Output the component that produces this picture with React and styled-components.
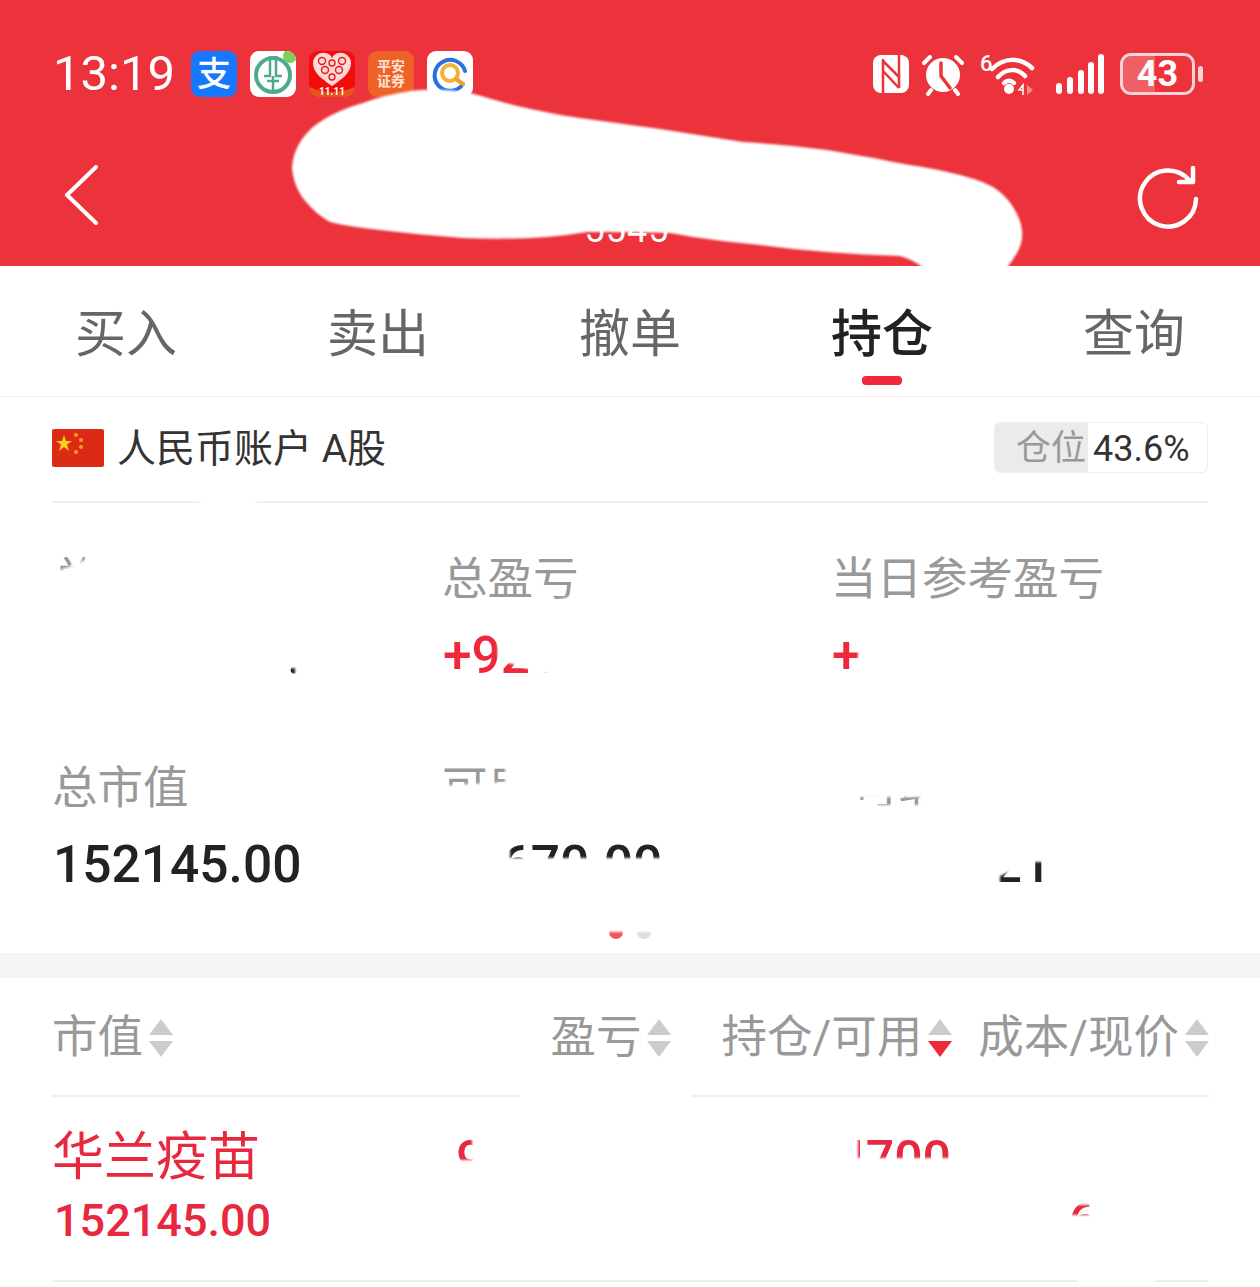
import React from "react";
import styled, {createGlobalStyle} from "styled-components";

const tabs = ['买入', '卖出', '撤单', '持仓', '查询']
const stats = [
    {label: '总资产', value: '34895621.00'},
    {label: '总盈亏', value: '+92145.00', red: true},
    {label: '当日参考盈亏', value: '+1250.00', red: true},
    {label: '总市值', value: '152145.00'},
    {label: '可用', value: '19670.00'},
    {label: '可取资金', value: '19681.21', indent: true},
]
const columns = [
    {label: '盈亏', gap: 0},
    {label: '持仓/可用', gap: 50, active: true},
    {label: '成本/现价', gap: 26},
]

// white scribbles that hide the private numbers in the screenshot
const scribbles = [
    'M292 168C293 150 302 137 313 127C328 115 345 108 363 103C382 96 400 92 420 90C438 89 455 90 470 93C485 97 498 101 513 105C535 110 558 115 580 118C607 122 633 125 660 129C688 133 715 138 743 142C771 144 799 146 827 150C849 154 871 157 893 162C915 166 938 169 960 175C972 178 984 182 993 187C1002 193 1008 199 1013 207C1018 215 1021 222 1022 230C1023 238 1021 246 1017 253C1014 258 1011 262 1007 268H924C916 262 908 258 900 256C875 255 851 254 827 252C805 250 782 248 760 245C738 243 715 240 693 237C686 236 678 234 670 233C642 232 614 232 587 232C574 234 560 236 547 237C519 239 491 239 463 238C435 236 407 233 380 230C363 228 346 226 330 222C320 216 313 210 307 203C298 193 293 181 292 168Z',
    'M200 498H256V505H200Z',
    'M85 545H440V575H85Z',
    'M40 575Q60 572 85 560V575L440 575V668H40Z',
    'M40 668H285V700H40Z',
    'M295 668H440V700H295Z',
    'M540 604L582 594L600 620H540Z',
    'M497 625H830V700H440V680L560 678L498 660Z',
    'M858 625H1215V700H858Z',
    'M505 760H820V843H440V786L505 782Z',
    'M440 858H820V905H440Z',
    'M440 843H510V858H440Z',
    'M662 843H820V858H662Z',
    'M820 750H1215V797H820Z',
    'M820 797H855V862H820Z',
    'M920 797H1215V862H920Z',
    'M855 805H920V862H855Z',
    'M820 862H1032L1000 876V900H820Z',
    'M1047 855H1215V900H1047Z',
    'M560 905H700V932H560Z',
    'M520 1093H692V1099H520Z',
    'M440 1099H1215V1138H440Z',
    'M472 1138H858V1275H472Z',
    'M440 1160H472V1275H440Z',
    'M858 1158H960V1275H858Z',
    'M950 1138H1070V1275H950Z',
    'M960 1138H1215V1205H960Z',
    'M1090 1205H1215V1215H1090Z',
    'M1070 1215H1215V1275H1070Z',
    'M1078 1277H1155V1283H1078Z',
]

const App = () => {
    const position = 43.9

    return (
        <Page>
            <GlobalStyle/>
            <Header>
                <StatusBar>
                    <Left>
                        <Time>13:19</Time>
                        <AppTile $bg="#1677ff">
                            <AlipayGlyph>支</AlipayGlyph>
                        </AppTile>
                        <AppTile $bg="#ffffff"><BankLogo/></AppTile>
                        <AppTile $bg="#f40b0b"><HeartLogo/></AppTile>
                        <AppTile $bg="#ef6127">
                            <PingAn>平安<br/>证券</PingAn>
                        </AppTile>
                        <AppTile $bg="#ffffff"><SearchLogo/></AppTile>
                    </Left>
                    <Right>
                        <NfcIcon/>
                        <AlarmIcon/>
                        <WifiIcon/>
                        <SignalIcon/>
                        <Battery>
                            <BatteryBody>
                                <BatteryFill/>
                                <BatteryText>43</BatteryText>
                            </BatteryBody>
                            <BatteryNub/>
                        </Battery>
                    </Right>
                </StatusBar>
                <Nav>
                    <svg width="34" height="60" viewBox="0 0 34 60" fill="none" stroke="#fff" strokeWidth="4" strokeLinecap="round" strokeLinejoin="round">
                        <path d="M32 2L3 30L32 58"/>
                    </svg>
                    <Account>5545</Account>
                    <svg width="64" height="64" viewBox="0 0 64 64" fill="none" stroke="#fff" strokeWidth="4.5" strokeLinecap="round" strokeLinejoin="round">
                        <path d="M53 15A28 28 0 1 0 60 34"/>
                        <path d="M57 3V17H43"/>
                    </svg>
                </Nav>
            </Header>

            <Tabs>
                {tabs.map(tab => (
                    <Tab key={tab} $active={tab === '持仓'}>{tab}</Tab>
                ))}
            </Tabs>

            <AccountRow>
                <AccountName>
                    <Flag/>
                    <AccountText>人民币账户 A股</AccountText>
                </AccountName>
                <Badge>
                    <BadgeFill style={{width: `${position}%`}}/>
                    <BadgeLabel>仓位</BadgeLabel>
                    <BadgeValue>43.6%</BadgeValue>
                </Badge>
            </AccountRow>

            <Stats>
                {stats.map(item => (
                    <Stat key={item.label}>
                        <StatLabel $indent={item.indent}>{item.label}</StatLabel>
                        <StatValue $red={item.red}>{item.value}</StatValue>
                    </Stat>
                ))}
            </Stats>
            <Dots>
                <Dot $active/>
                <Dot/>
            </Dots>

            <Band/>

            <TableHead>
                <HeadCell>市值<SortArrows/></HeadCell>
                <HeadRight>
                    {columns.map(col => (
                        <HeadCell key={col.label} $gap={col.gap}>
                            {col.label}
                            <SortArrows active={col.active}/>
                        </HeadCell>
                    ))}
                </HeadRight>
            </TableHead>

            <Row>
                <div>
                    <StockName>华兰疫苗</StockName>
                    <StockValue>152145.00</StockValue>
                </div>
                <Cell>
                    <CellLine>92145.00</CellLine>
                    <CellLine>+60.48%</CellLine>
                </Cell>
                <Cell>
                    <CellLine>4700</CellLine>
                    <CellLine>4700</CellLine>
                </Cell>
                <Cell $inset={12}>
                    <CellLine>13.95</CellLine>
                    <CellLine>63.38</CellLine>
                </Cell>
            </Row>

            <Scribble viewBox="0 0 1260 1287">
                {scribbles.map(d => <path key={d} d={d} fill="#fff"/>)}
            </Scribble>
        </Page>
    )
}

const SortArrows = ({active}) => (
    <Arrows>
        <Arrow $up/>
        <Arrow $red={active}/>
    </Arrows>
)

const NfcIcon = () => (
    <NfcSvg viewBox="0 0 38 40">
        <rect x="1" y="1" width="36" height="38" rx="8" fill="#fff"/>
        <g fill="none" stroke="#ec323b" strokeWidth="2.5">
            <path d="M11 5V39M27 0V34"/>
            <path d="M11 7L27 23M11 17L27 34"/>
        </g>
    </NfcSvg>
)

const AlarmIcon = () => (
    <svg width="44" height="44" viewBox="0 0 44 44" fill="none" stroke="#fff" strokeLinecap="round">
        <circle cx="22" cy="23" r="17" fill="#fff" stroke="none"/>
        <path d="M3 11L9 5M41 11L35 5M10 38L7 42M34 38L37 42" strokeWidth="4"/>
        <path d="M20 11V24L29 36" stroke="#ec323b" strokeWidth="3.5"/>
    </svg>
)

const WifiIcon = () => (
    <svg width="60" height="44" viewBox="0 0 60 44" fill="none">
        <text x="0" y="19" fill="#fff" fontSize="22" fontWeight="500" fontFamily="Roboto, sans-serif">6</text>
        <g stroke="#fff" strokeWidth="4.5" strokeLinecap="round">
            <path d="M12 17C24 5 40 5 52 16"/>
            <path d="M18 25C26 16 38 16 45 24"/>
            <path d="M24 31C27 28 31 28 34 31"/>
        </g>
        <circle cx="29" cy="37" r="5" fill="#fff"/>
        <path d="M43 38L39 38L43 33V43" fill="none" stroke="#fff" strokeWidth="1.500"/>
        <path d="M47 33L53 38L47 43Z" fill="#fff" opacity="0.45"/>
    </svg>
)

const SignalIcon = () => (
    <svg width="50" height="42" viewBox="0 0 50 42" fill="#fff">
        <rect x="1" y="30" width="6" height="11" rx="3"/>
        <rect x="12" y="24" width="6" height="17" rx="3"/>
        <rect x="23" y="17" width="6" height="24" rx="3"/>
        <rect x="33" y="9" width="6" height="32" rx="3"/>
        <rect x="43" y="1" width="6" height="40" rx="3"/>
    </svg>
)

const BankLogo = () => (
    <svg width="46" height="46" viewBox="0 0 46 46" fill="none">
        <circle cx="23" cy="24" r="17" stroke="#4fa98f" strokeWidth="4"/>
        <path d="M20 5V25H14M26 5V25H32M23 25V42M17 30H29" stroke="#4fa98f" strokeWidth="2.500"/>
        <circle cx="40" cy="5" r="7" fill="#7ccf5c"/>
    </svg>
)

const HeartLogo = () => (
    <svg width="46" height="46" viewBox="0 0 46 46">
        <path d="M23 35C13 28 4 22 4 12C4 6 10 1 16 2C19 2 22 4 23 7C24 4 27 2 30 2C36 1 42 6 42 12C42 22 33 28 23 35Z" fill="#fdd8d8"/>
        <g stroke="#e81919" strokeWidth="1.400" fill="none">
            <circle cx="13" cy="10" r="3.500"/>
            <circle cx="23" cy="12" r="3"/>
            <circle cx="33" cy="10" r="3.500"/>
            <circle cx="16" cy="19" r="3.500"/>
            <circle cx="30" cy="19" r="3.500"/>
            <circle cx="23" cy="26" r="3"/>
        </g>
        <path d="M0 36Q23 46 46 36V46H0Z" fill="#e9541c"/>
        <text x="23" y="44" textAnchor="middle" fill="#fff" fontSize="10" fontWeight="700" fontFamily="Roboto, sans-serif">11.11</text>
    </svg>
)

const SearchLogo = () => (
    <svg width="46" height="46" viewBox="0 0 46 46" fill="none" strokeLinecap="round">
        <path d="M36 33A15.500 15.500 0 1 1 38 20" stroke="#2a6fe0" strokeWidth="4"/>
        <circle cx="23" cy="22" r="8" stroke="#f3b233" strokeWidth="4"/>
        <path d="M29 28L36 33" stroke="#f3a02a" strokeWidth="4"/>
    </svg>
)

const Flag = () => (
    <FlagBox viewBox="0 0 52 38">
        <rect width="52" height="38" rx="2" fill="#dd2a14"/>
        <path d="M12 6L14 12H20L15 15.500L17 22L12 18L7 22L9 15.500L4 12H10Z" fill="#fbd01c"/>
        <circle cx="24" cy="6" r="2" fill="#f5a11c"/>
        <circle cx="29" cy="11" r="2" fill="#f5a11c"/>
        <circle cx="29" cy="18" r="2" fill="#f5a11c"/>
        <circle cx="24" cy="23" r="2" fill="#f5a11c"/>
    </FlagBox>
)

const GlobalStyle = createGlobalStyle`
  html, body {
    margin: 0;
    padding: 0;
    background: #fff;
  }
  body {
    font-family: Roboto, "Noto Sans CJK SC", sans-serif;
  }
`

const Page = styled.div`
  position: relative;
  width: 1260px;
  height: 1287px;
  overflow: hidden;
  background: #fff;
`

const Scribble = styled.svg`
  position: absolute;
  top: 0;
  left: 0;
  width: 1260px;
  height: 1287px;
  filter: blur(1px);
  pointer-events: none;
`

const Header = styled.header`
  height: 266px;
  box-sizing: border-box;
  padding-top: 51px;
  background: #ec323b;
  color: #fff;
  overflow: hidden;
`

const StatusBar = styled.div`
  display: flex;
  justify-content: space-between;
  align-items: center;
  height: 46px;
  padding: 0 57px 0 53px;
`

const Left = styled.div`
  display: flex;
  align-items: center;
  gap: 13px;
`

const Right = styled.div`
  display: flex;
  align-items: center;
  gap: 15px;
`

const NfcSvg = styled.svg`
  width: 38px;
  height: 40px;
  margin-right: -4px;
`

const Time = styled.span`
  font-size: 49px;
  line-height: 46px;
  width: 125px;
`

const AppTile = styled.div`
  display: flex;
  align-items: center;
  justify-content: center;
  width: 46px;
  height: 46px;
  border-radius: 9px;
  overflow: hidden;
  background: ${({$bg}) => $bg};
`

const AlipayGlyph = styled.span`
  font-size: 34px;
  line-height: 46px;
  font-weight: 500;
  color: #fff;
`

const PingAn = styled.span`
  font-size: 14px;
  line-height: 15px;
  font-weight: 700;
  text-align: center;
  color: #fde3d4;
`

const Battery = styled.div`
  display: flex;
  align-items: center;
  gap: 3px;
`

const BatteryBody = styled.div`
  position: relative;
  display: flex;
  align-items: center;
  justify-content: center;
  box-sizing: border-box;
  width: 75px;
  height: 42px;
  border: 3px solid #f7d5d7;
  border-radius: 11px;
  overflow: hidden;
`

const BatteryFill = styled.div`
  position: absolute;
  top: 0;
  bottom: 0;
  left: 0;
  width: 47%;
  background: rgba(255, 255, 255, 0.22);
`

const BatteryText = styled.span`
  position: relative;
  font-size: 36px;
  line-height: 36px;
  font-weight: 700;
`

const BatteryNub = styled.div`
  width: 5px;
  height: 16px;
  border-radius: 3px;
  background: #f7d5d7;
`

const Nav = styled.nav`
  display: flex;
  justify-content: space-between;
  align-items: flex-start;
  margin-top: 68px;
  padding: 0 60px 0 64px;
`

const Account = styled.div`
  margin: 43px 0 0 20px;
  font-size: 36px;
  line-height: 44px;
  letter-spacing: 1px;
`

const Tabs = styled.div`
  display: grid;
  grid-template-columns: repeat(5, 252px);
  height: 131px;
  box-sizing: border-box;
  border-bottom: 1px solid #eee;
`

const Tab = styled.div`
  position: relative;
  padding-top: 34px;
  text-align: center;
  font-size: 51px;
  line-height: 70px;
  font-weight: ${({$active}) => ($active ? 500 : 400)};
  color: ${({$active}) => ($active ? '#222' : '#666')};
  &::after {
    content: '';
    display: ${({$active}) => ($active ? 'block' : 'none')};
    position: absolute;
    left: 50%;
    bottom: 11px;
    width: 40px;
    height: 9px;
    margin-left: -20px;
    border-radius: 4px;
    background: #f0283c;
  }
`

const AccountRow = styled.div`
  display: flex;
  justify-content: space-between;
  align-items: center;
  height: 106px;
  margin: 0 52px;
  box-sizing: border-box;
  padding-bottom: 3px;
  border-bottom: 2px solid #f0f0f0;
`

const AccountName = styled.div`
  display: flex;
  align-items: center;
  gap: 13px;
  color: #333;
`

const AccountText = styled.span`
  padding-bottom: 6px;
  font-size: 39px;
`

const FlagBox = styled.svg`
  width: 52px;
  height: 38px;
`

const Badge = styled.div`
  position: relative;
  display: flex;
  align-items: center;
  box-sizing: border-box;
  width: 214px;
  height: 51px;
  padding-left: 21px;
  border: 1px solid #eee;
  border-radius: 6px;
  overflow: hidden;
`

const BadgeFill = styled.div`
  position: absolute;
  top: 0;
  bottom: 0;
  left: 0;
  background: #ebebeb;
`

const BadgeLabel = styled.span`
  position: relative;
  margin-bottom: 6px;
  font-size: 35px;
  color: #999;
`

const BadgeValue = styled.span`
  position: relative;
  margin: 2px 0 0 7px;
  font-size: 36px;
  color: #333;
`

const Stats = styled.div`
  display: grid;
  grid-template-columns: 390px 389px 1fr;
  row-gap: 73px;
  margin-left: 52px;
  padding-top: 47px;
`

const Stat = styled.div`
  display: flex;
  flex-direction: column;
  gap: 16px;
`

const StatLabel = styled.div`
  font-size: 45.5px;
  line-height: 60px;
  color: #999;
  padding-left: ${({$indent}) => ($indent ? '22px' : '0')};
`

const StatValue = styled.div`
  font-size: 51.5px;
  line-height: 60px;
  font-weight: 500;
  margin-left: 1px;
  color: ${({$red}) => ($red ? '#f0283c' : '#222')};
`

const Dots = styled.div`
  display: flex;
  justify-content: center;
  gap: 14px;
  margin-top: 30px;
  margin-bottom: 14px;
`

const Dot = styled.div`
  width: 14px;
  height: 14px;
  border-radius: 50%;
  background: ${({$active}) => ($active ? '#ef5560' : '#ddd')};
`

const Band = styled.div`
  height: 25px;
  background: #f5f5f5;
`

const TableHead = styled.div`
  display: flex;
  justify-content: space-between;
  align-items: center;
  height: 119px;
  box-sizing: border-box;
  margin: 0 51px 0 52px;
  padding-top: 2px;
  border-bottom: 2px solid #eee;
`

const HeadRight = styled.div`
  display: flex;
  align-items: center;
`

const HeadCell = styled.div`
  display: flex;
  align-items: center;
  gap: 6px;
  margin-left: ${({$gap}) => $gap || 0}px;
  font-size: 45.5px;
  line-height: 60px;
  color: #999;
`

const Arrows = styled.span`
  display: flex;
  flex-direction: column;
  gap: 6px;
`

const Arrow = styled.span`
  width: 0;
  height: 0;
  border-left: 12px solid transparent;
  border-right: 12px solid transparent;
  ${({$up, $red}) => $up
    ? 'border-bottom: 16px solid #ccc;'
    : `border-top: 16px solid ${$red ? '#f0283c' : '#ccc'};`}
`

const Row = styled.div`
  display: grid;
  grid-template-columns: 1fr 230px 282px 257px;
  height: 185px;
  box-sizing: border-box;
  margin: 0 52px;
  padding-top: 31px;
  border-bottom: 2px solid #eee;
  color: #e8283f;
`

const StockName = styled.div`
  font-size: 52px;
  line-height: 60px;
`

const StockValue = styled.div`
  margin: 3px 0 0 2px;
  font-size: 45px;
  line-height: 60px;
  font-weight: 500;
`

const Cell = styled.div`
  text-align: right;
  padding-right: ${({$inset}) => $inset || 0}px;
`

const CellLine = styled.div`
  font-size: 50px;
  line-height: 62px;
  font-weight: 500;
`

export default App
